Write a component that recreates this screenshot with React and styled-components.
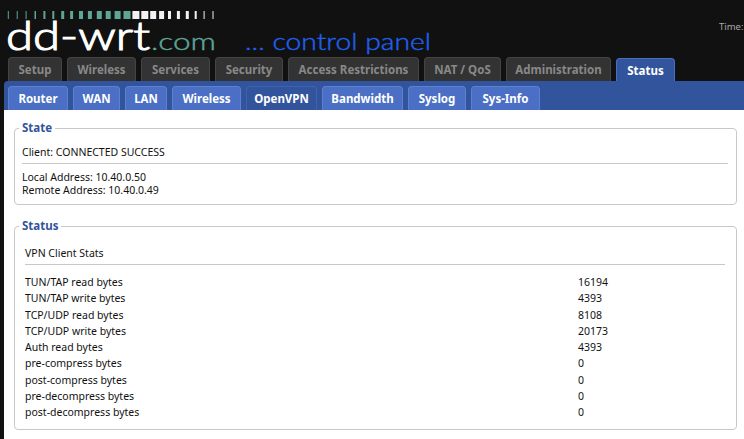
import React from "react";
import styled, { createGlobalStyle } from "styled-components";

const mainTabs = ["Setup", "Wireless", "Services", "Security", "Access Restrictions", "NAT / QoS", "Administration", "Status"];
const mainWidths = [54, 69, 69, 68, 131, 77, 105, 59];
const subTabs = ["Router", "WAN", "LAN", "Wireless", "OpenVPN", "Bandwidth", "Syslog", "Sys-Info"];
const subWidths = [60, 47, 42, 69, 71, 81, 58, 69];
const stats = [
	["TUN/TAP read bytes", "16194"],
	["TUN/TAP write bytes", "4393"],
	["TCP/UDP read bytes", "8108"],
	["TCP/UDP write bytes", "20173"],
	["Auth read bytes", "4393"],
	["pre-compress bytes", "0"],
	["post-compress bytes", "0"],
	["pre-decompress bytes", "0"],
	["post-decompress bytes", "0"],
];
const bars = [1, 1, 1, 1.5, 2, 2, 3, 3, 4, 4, 5, 5, 6, 7, 7, 7, 6, 5, 3, 3, 3, 2, 1, 1];

const App = () => {
	return (
		<Page>
			<GlobalStyle />
			<Header>
				<svg width="440" height="57" viewBox="0 0 440 57">
					{bars.map((w, i) => (
						<rect key={i} x={7.8 + i * 8.9} y="11" width={w} height="8" fill={i < 14 ? "#5fa596" : "#f2f2f2"} />
					))}
					<text x="6" y="50" fontFamily="Lato" fontWeight="300" fontSize="39" fill="#fff" stroke="#fff" strokeWidth="1.1" textLength="144" lengthAdjust="spacingAndGlyphs">dd-wrt</text>
					<text x="151" y="50" fontFamily="Lato" fontWeight="300" fontSize="24" fill="#5fa596" stroke="#5fa596" strokeWidth="0.4" textLength="65" lengthAdjust="spacingAndGlyphs">.com</text>
					<text x="245" y="50" fontFamily="Lato" fontWeight="300" fontSize="23" fill="#2060f0" stroke="#2060f0" strokeWidth="0.4" textLength="186" lengthAdjust="spacingAndGlyphs">... control panel</text>
				</svg>
				<Time>Time:</Time>
			</Header>
			<MainTabs>
				{mainTabs.map((t, i) => (
					<MainTab key={t} $w={mainWidths[i]} $active={t === "Status"}>{t}</MainTab>
				))}
			</MainTabs>
			<Panel>
				<SubTabs>
					{subTabs.map((t, i) => (
						<SubTab key={t} $w={subWidths[i]} $active={t === "OpenVPN"}>{t}</SubTab>
					))}
				</SubTabs>
				<Content>
					<Box>
						<Legend>State</Legend>
						<Client>Client: CONNECTED SUCCESS</Client>
						<Divider />
						<Line>Local Address: 10.40.0.50</Line>
						<Line>Remote Address: 10.40.0.49</Line>
					</Box>
					<StatusBox>
						<Legend>Status</Legend>
						<StatsTitle>VPN Client Stats</StatsTitle>
						<Divider />
						<StatsTable>
							{stats.map(([k, v]) => (
								<StatRow key={k}>
									<span>{k}</span>
									<span>{v}</span>
								</StatRow>
							))}
						</StatsTable>
					</StatusBox>
				</Content>
			</Panel>
		</Page>
	);
};

export default App;

const GlobalStyle = createGlobalStyle`
	html, body {
		margin: 0;
		background: #111;
		overflow: hidden;
	}
`;

const Page = styled.div`
	width: 744px;
	height: 439px;
	overflow: hidden;
	background: #111;
	font-family: "Noto Sans", "Liberation Sans", sans-serif;
`;

const Header = styled.header`
	height: 57px;
	display: flex;
	justify-content: space-between;
`;

const Time = styled.div`
	width: 25px;
	padding-top: 20px;
	font-size: 9.5px;
	color: #aaa;
	white-space: nowrap;
`;

const MainTabs = styled.nav`
	height: 24px;
	display: flex;
	gap: 5px;
	padding-left: 8px;
`;

const MainTab = styled.div`
	box-sizing: border-box;
	width: ${(p) => p.$w}px;
	height: ${(p) => (p.$active ? "23px" : "24px")};
	margin-top: ${(p) => (p.$active ? "1px" : "0")};
	display: flex;
	align-items: center;
	justify-content: center;
	border: 1px solid ${(p) => (p.$active ? "#4a6fc4" : "#444")};
	border-bottom: 0;
	border-radius: 4px 4px 0 0;
	background: ${(p) => (p.$active ? "#32549c" : "#333")};
	color: ${(p) => (p.$active ? "#fff" : "#888")};
	font-size: 11.5px;
	font-weight: 700;
	white-space: nowrap;
`;

const Panel = styled.main`
	margin-left: 4px;
`;

const SubTabs = styled.nav`
	height: 29px;
	box-sizing: border-box;
	display: flex;
	align-items: flex-end;
	gap: 5px;
	padding-left: 4px;
	background: #32549c;
	border-radius: 4px 0 0 0;
`;

const SubTab = styled.div`
	box-sizing: border-box;
	width: ${(p) => p.$w}px;
	height: 24px;
	display: flex;
	align-items: center;
	justify-content: center;
	border: 1px solid ${(p) => (p.$active ? "#3f62b0" : "#5d80d0")};
	border-bottom: 0;
	border-radius: 4px 4px 0 0;
	background: ${(p) => (p.$active ? "#32549c" : "#4a6fc4")};
	color: #fff;
	font-size: 11.5px;
	font-weight: 700;
	white-space: nowrap;
`;

const Content = styled.div`
	background: #fff;
	height: 329px;
	padding: 11px 7px 0 10px;
	box-sizing: border-box;
	color: #111;
	font-size: 10.5px;
`;

const Box = styled.fieldset`
	margin: 0 0 14px;
	padding: 10px 8px 7px 7px;
	min-width: 0;
	border: 1px solid #c8c8c8;
	border-radius: 4px;
`;

const StatusBox = styled(Box)`
	padding: 13px 11px 0 10px;
	height: 211px;
	box-sizing: border-box;
`;

const Legend = styled.legend`
	padding: 0 3px;
	margin-left: -3px;
	color: #32549c;
	font-size: 11.5px;
	font-weight: 700;
	line-height: 14px;

	${StatusBox} & {
		margin-left: -6px;
	}
`;

const Client = styled.div`
	line-height: 14px;
`;

const StatsTitle = styled.div`
	line-height: 14px;
`;

const Divider = styled.hr`
	border: 0;
	border-top: 1px solid #c8c8c8;
	margin: 4px 0 7px;
`;

const Line = styled.div`
	line-height: 13px;
`;

const StatsTable = styled.div`
	padding-top: 2px;
`;

const StatRow = styled.div`
	display: grid;
	grid-template-columns: 553px 1fr;
	height: 16.25px;
	line-height: 16px;
`;
